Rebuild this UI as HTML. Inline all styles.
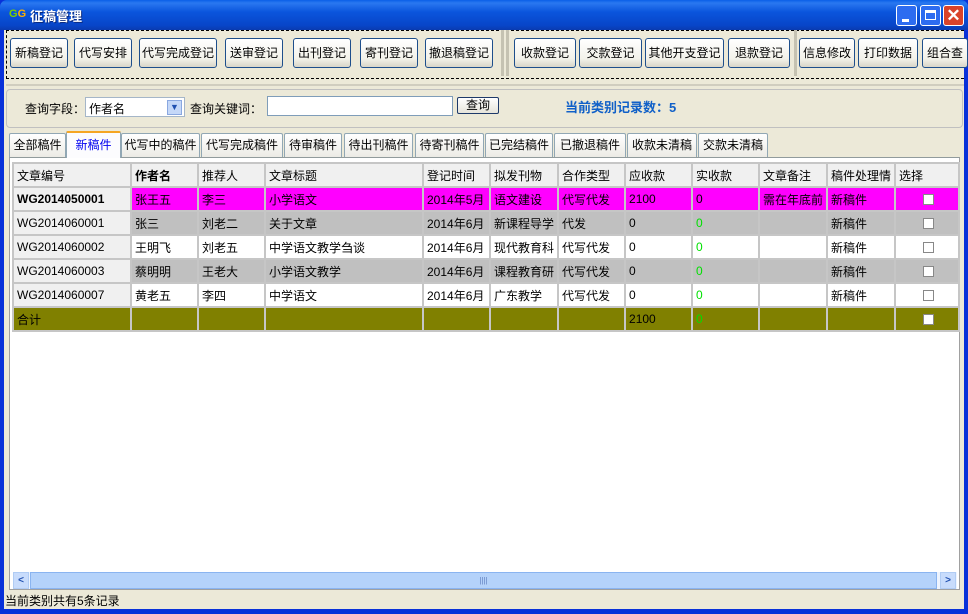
<!DOCTYPE html>
<html><head><meta charset="utf-8"><style>
*{box-sizing:border-box;margin:0;padding:0}
body{width:968px;height:614px;overflow:hidden;background:#0831d9;font-family:"Liberation Sans","Noto Sans CJK SC",sans-serif;font-size:12px;color:#000;position:relative}
.a{position:absolute}
#title{left:0;top:0;width:968px;height:30px;background:linear-gradient(#0a5fe8 0%,#2a78f0 10%,#0a55dd 40%,#0845c8 85%,#0a3bb0 100%);border-radius:7px 7px 0 0}
#client{left:4px;top:30px;width:960px;height:579px;background:#ece9d8}
.btn{position:absolute;top:38px;height:30px;border:1px solid #1e4f8c;border-radius:3px;background:linear-gradient(#fff,#f3f2ea 70%,#d8d5c8);font-size:12px;line-height:28px;text-align:center;white-space:nowrap;overflow:hidden}
.tab{position:absolute;top:133px;height:24px;border:1px solid #91a7b4;border-bottom:none;border-radius:2px 2px 0 0;background:linear-gradient(#fff,#ecebe5);font-size:12px;line-height:22px;text-align:center;white-space:nowrap}
table{border-collapse:collapse;table-layout:fixed;position:absolute;left:12px;top:162px}
td{border:2px solid #c6c6c6;height:24px;padding:0 3px;font-size:12px;white-space:nowrap;overflow:hidden;background:#fff}
tr.h td{background:#f0f0f0}
tr.m td{background:#ff00ff}
tr.g td{background:#c0c0c0}
tr.o td{background:#808000}
td.f{background:#f0f0f0!important}
.cb{display:inline-block;width:11px;height:11px;border:1px solid #888;background:#fff;vertical-align:middle;margin-left:24px}
.gr{color:#00e000}
</style></head><body>
<div id="title" class="a"></div>
<div class="a" style="left:9px;top:8px;width:17px;height:13px;font:bold 11px 'Liberation Sans';"><span style="color:#7cd000">G</span><span style="color:#ffb000">G</span></div>
<div class="a" style="left:30px;top:6px;color:#fff;font-size:13px;font-weight:bold;text-shadow:1px 1px #0a2a80">征稿管理</div>
<div class="a" style="left:896px;top:5px;width:21px;height:21px;border:1px solid #fff;border-radius:3px;background:#2d6cf0"><div class="a" style="left:5px;top:13px;width:7px;height:3px;background:#fff"></div></div>
<div class="a" style="left:920px;top:5px;width:21px;height:21px;border:1px solid #fff;border-radius:3px;background:#2d6cf0"><div class="a" style="left:4px;top:4px;width:11px;height:10px;border:1px solid #fff;border-top:3px solid #fff"></div></div>
<div class="a" style="left:943px;top:5px;width:21px;height:21px;border:1px solid #fff;border-radius:3px;background:#d9432a;color:#fff;font:bold 17px/19px 'Liberation Sans';text-align:center">✕</div>
<div id="client" class="a"></div>
<div class="a" style="left:6px;top:30px;width:958px;height:49px;border-top:1px dashed #000;border-bottom:1px dashed #000;border-left:1px dashed #000"></div>
<div class="a" style="left:501px;top:30px;width:3px;height:46px;background:#c5c2b2"></div>
<div class="a" style="left:506px;top:30px;width:3px;height:46px;background:#c5c2b2"></div>
<div class="a" style="left:794px;top:30px;width:3px;height:46px;background:#c5c2b2"></div>
<div class="btn" style="left:10px;width:58px">新稿登记</div>
<div class="btn" style="left:74px;width:58px">代写安排</div>
<div class="btn" style="left:139px;width:78px">代写完成登记</div>
<div class="btn" style="left:225px;width:58px">送审登记</div>
<div class="btn" style="left:293px;width:58px">出刊登记</div>
<div class="btn" style="left:360px;width:58px">寄刊登记</div>
<div class="btn" style="left:425px;width:68px">撤退稿登记</div>
<div class="btn" style="left:514px;width:62px">收款登记</div>
<div class="btn" style="left:579px;width:63px">交款登记</div>
<div class="btn" style="left:645px;width:79px">其他开支登记</div>
<div class="btn" style="left:728px;width:62px">退款登记</div>
<div class="btn" style="left:799px;width:56px">信息修改</div>
<div class="btn" style="left:858px;width:60px">打印数据</div>
<div class="btn" style="left:922px;width:46px;text-align:left;padding-left:4px">组合查</div>
<div class="a" style="left:6px;top:84px;width:958px;height:2px;background:#d0cdbf"></div>
<div class="a" style="left:6px;top:89px;width:957px;height:39px;border:1px solid #c0c0c0;border-radius:4px"></div>
<div class="a" style="left:25px;top:100px;font-size:12px">查询字段：</div>
<div class="a" style="left:85px;top:97px;width:100px;height:20px;border:1px solid #a5b6c8;background:#fff;padding:2px 3px;font-size:12px">作者名</div>
<div class="a" style="left:167px;top:100px;width:15px;height:15px;background:#c5d8f8;border:1px solid #8aa8e0;color:#2050b0;font-size:9px;line-height:13px;text-align:center">▼</div>
<div class="a" style="left:190px;top:100px">查询关键词：</div>
<div class="a" style="left:267px;top:96px;width:186px;height:20px;border:1px solid #7f9db9;background:#fff"></div>
<div class="a" style="left:457px;top:97px;width:42px;height:17px;border:1px solid #1e3a6a;border-radius:2px;background:linear-gradient(#fff,#e6e4da);text-align:center;line-height:15px;font-size:12px">查询</div>
<div class="a" style="left:565px;top:97px;color:#1060c8;font-weight:bold;font-size:13px">当前类别记录数：5</div>
<div class="tab" style="left:9px;width:57px">全部稿件</div>
<div class="tab" style="left:66px;width:55px;top:131px;height:27px;background:#fcfcfe;border-top:2px solid #f5a623;color:#0000f0;z-index:2;line-height:24px">新稿件</div>
<div class="tab" style="left:121px;width:79px">代写中的稿件</div>
<div class="tab" style="left:201px;width:82px">代写完成稿件</div>
<div class="tab" style="left:284px;width:58px">待审稿件</div>
<div class="tab" style="left:344px;width:69px">待出刊稿件</div>
<div class="tab" style="left:415px;width:69px">待寄刊稿件</div>
<div class="tab" style="left:485px;width:68px">已完结稿件</div>
<div class="tab" style="left:554px;width:72px">已撤退稿件</div>
<div class="tab" style="left:627px;width:70px">收款未清稿</div>
<div class="tab" style="left:698px;width:70px">交款未清稿</div>
<div class="a" style="left:9px;top:157px;width:951px;height:433px;background:#fff;border:1px solid #a0a0a0;border-top:1px solid #919b9c"></div>
<table>
<colgroup><col style="width:118px"><col style="width:67px"><col style="width:67px"><col style="width:158px"><col style="width:67px"><col style="width:67px"><col style="width:67px"><col style="width:67px"><col style="width:67px"><col style="width:67px"><col style="width:67px"><col style="width:64px"></colgroup>
<tr class="h"><td>文章编号</td><td><b>作者名</b></td><td>推荐人</td><td>文章标题</td><td>登记时间</td><td>拟发刊物</td><td>合作类型</td><td>应收款</td><td>实收款</td><td>文章备注</td><td>稿件处理情</td><td>选择</td></tr>
<tr class="m"><td class="f"><b>WG2014050001</b></td><td>张王五</td><td>李三</td><td>小学语文</td><td>2014年5月</td><td>语文建设</td><td>代写代发</td><td>2100</td><td>0</td><td>需在年底前</td><td>新稿件</td><td><span class="cb"></span></td></tr>
<tr class="g"><td class="f">WG2014060001</td><td>张三</td><td>刘老二</td><td>关于文章</td><td>2014年6月</td><td>新课程导学</td><td>代发</td><td>0</td><td class="gr">0</td><td></td><td>新稿件</td><td><span class="cb"></span></td></tr>
<tr><td class="f">WG2014060002</td><td>王明飞</td><td>刘老五</td><td>中学语文教学刍谈</td><td>2014年6月</td><td>现代教育科</td><td>代写代发</td><td>0</td><td class="gr">0</td><td></td><td>新稿件</td><td><span class="cb"></span></td></tr>
<tr class="g"><td class="f">WG2014060003</td><td>蔡明明</td><td>王老大</td><td>小学语文教学</td><td>2014年6月</td><td>课程教育研</td><td>代写代发</td><td>0</td><td class="gr">0</td><td></td><td>新稿件</td><td><span class="cb"></span></td></tr>
<tr><td class="f">WG2014060007</td><td>黄老五</td><td>李四</td><td>中学语文</td><td>2014年6月</td><td>广东教学</td><td>代写代发</td><td>0</td><td class="gr">0</td><td></td><td>新稿件</td><td><span class="cb"></span></td></tr>
<tr class="o"><td>合计</td><td></td><td></td><td></td><td></td><td></td><td></td><td>2100</td><td class="gr">0</td><td></td><td></td><td><span class="cb"></span></td></tr>
</table>
<div class="a" style="left:13px;top:572px;width:944px;height:17px;background:#eef4fe"></div>
<div class="a" style="left:13px;top:572px;width:16px;height:17px;border:1px solid #b0ccf4;background:#c8dcfc;color:#2050b0;font:bold 10px/15px 'Liberation Sans';text-align:center">&lt;</div>
<div class="a" style="left:30px;top:572px;width:907px;height:17px;border:1px solid #8ab4f0;background:#b4d2fa;text-align:center;color:#6080c0;font-size:8px;line-height:15px">||||</div>
<div class="a" style="left:940px;top:572px;width:16px;height:17px;border:1px solid #b0ccf4;background:#c8dcfc;color:#2050b0;font:bold 10px/15px 'Liberation Sans';text-align:center">&gt;</div>
<div class="a" style="left:5px;top:592px;font-size:12px">当前类别共有5条记录</div>
</body></html>
